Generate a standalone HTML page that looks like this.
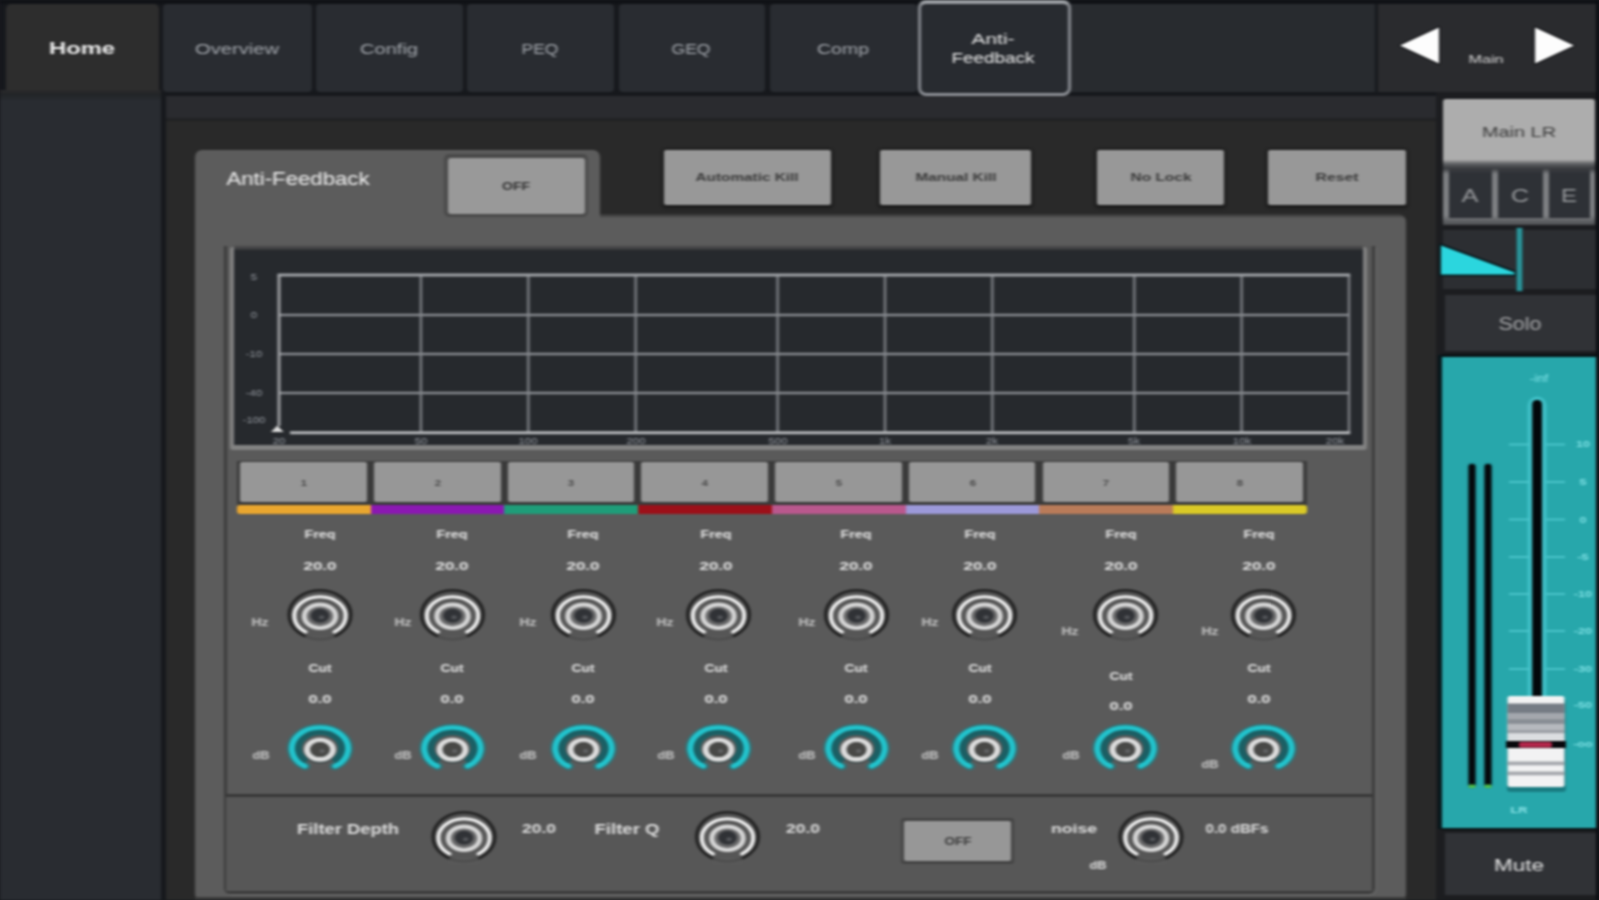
<!DOCTYPE html>
<html lang="en">
<head>
<meta charset="utf-8">
<title>Anti-Feedback</title>
<style>
html,body{margin:0;padding:0;background:#16181c;overflow:hidden;}
#app{position:relative;width:1599px;height:900px;overflow:hidden;background:#16181c;font-family:"Liberation Sans", sans-serif;filter:url(#soft);}
#app>div{position:absolute;}
#app>svg{position:absolute;left:0;top:0;}
#app>span{position:absolute;white-space:nowrap;line-height:1;transform-origin:50% 50%;}
</style>
</head>
<body>
<svg width="0" height="0" style="position:absolute"><defs><filter id="soft" x="0" y="0" width="100%" height="100%" color-interpolation-filters="sRGB"><feGaussianBlur stdDeviation="1.4 1.05" edgeMode="duplicate"/></filter></defs></svg>
<div id="app">
<div style="left:0px;top:0px;width:1599px;height:900px;background:#16181c;"></div>
<div style="left:0px;top:0px;width:1599px;height:4px;background:#101216;"></div>
<div style="left:1070px;top:4px;width:305px;height:88px;background:#282b2f;"></div>
<div style="left:6px;top:4px;width:152.5px;height:88px;background:#2d2d2d;border-radius:5px 5px 0 0;"></div>
<div style="left:163px;top:4px;width:148.5px;height:88px;background:#292c31;border-radius:4px;"></div>
<div style="left:316px;top:4px;width:147px;height:88px;background:#292c31;border-radius:4px;"></div>
<div style="left:467px;top:4px;width:147px;height:88px;background:#292c31;border-radius:4px;"></div>
<div style="left:618.5px;top:4px;width:146.5px;height:88px;background:#292c31;border-radius:4px;"></div>
<div style="left:769.5px;top:4px;width:147.0px;height:88px;background:#292c31;border-radius:4px;"></div>
<div style="left:917.5px;top:0px;width:153px;height:96px;background:#282b30;border-radius:8px;border:3.5px solid #8a8d93;border-top:4.5px solid #9a9da2;box-sizing:border-box;"></div>
<div style="left:1378px;top:4px;width:217.5px;height:88px;background:#2a2b2e;"></div>
<div style="left:0px;top:91px;width:161px;height:809px;background:#292c31;"></div>
<div style="left:0px;top:90px;width:161px;height:11px;background:linear-gradient(#2a2a2b 0,#222427 40%,#24272a 60%,#292c31 100%);"></div>
<div style="left:165.5px;top:96px;width:1270.5px;height:804px;background:#292929;"></div>
<div style="left:165.5px;top:96px;width:1270.5px;height:26px;background:linear-gradient(#2a2b2f 0,#2a2b2f 80%,#1e1f21 92%,#292929 100%);"></div>
<div style="left:1436px;top:92px;width:163px;height:808px;background:#1c1d20;"></div>
<div style="left:195px;top:214px;width:1211px;height:686px;background:linear-gradient(#353535 0,#5c5c5c 4.5px);border-radius:0 8px 6px 6px;"></div>
<div style="left:195px;top:150px;width:405px;height:80px;background:#5c5c5c;border-radius:7px 7px 0 0;"></div>
<div style="left:195px;top:897px;width:1211px;height:3px;background:#3a3a3a;"></div>
<div style="left:223.5px;top:246px;width:1151px;height:647.5px;background:#5a5a5a;border:3px solid #3b3b3b;border-top:none;box-sizing:border-box;border-radius:0 0 6px 6px;box-shadow:1.5px 1.5px 0 #666;"></div>
<div style="left:226px;top:793.5px;width:1146px;height:3.5px;background:#383838;"></div>
<div style="left:226px;top:797px;width:1146px;height:94px;background:#575757;"></div>
<div style="left:444px;top:154px;width:144px;height:63px;background:#4a4a4a;border-radius:5px;"></div>
<div style="left:448px;top:158px;width:137px;height:56px;background:#999;border-radius:3px;"></div>
<div style="left:664px;top:150px;width:167px;height:55px;background:#989898;border-radius:2px;box-shadow:0 1px 3px 1.5px #1b1b1b;"></div>
<div style="left:879.5px;top:150px;width:151.5px;height:55px;background:#989898;border-radius:2px;box-shadow:0 1px 3px 1.5px #1b1b1b;"></div>
<div style="left:1097px;top:150px;width:127px;height:55px;background:#989898;border-radius:2px;box-shadow:0 1px 3px 1.5px #1b1b1b;"></div>
<div style="left:1268px;top:150px;width:138px;height:55px;background:#989898;border-radius:2px;box-shadow:0 1px 3px 1.5px #1b1b1b;"></div>
<div style="left:230px;top:247px;width:1137px;height:202.5px;background:#828282;border-radius:3px;"></div>
<div style="left:233.5px;top:244.5px;width:1129.5px;height:8.5px;background:linear-gradient(#585858 0,#3d3e40 45%,#26292d 100%);"></div>
<div style="left:233.5px;top:250px;width:1129.5px;height:194.5px;background:#26292d;"></div>
<div style="left:236.5px;top:461px;width:134.7px;height:43.5px;background:#3a3a3a;"></div>
<div style="left:240.3px;top:461.5px;width:126.6px;height:40px;background:#979797;border-radius:2px;"></div>
<div style="left:370.2px;top:461px;width:134.7px;height:43.5px;background:#3a3a3a;"></div>
<div style="left:374.0px;top:461.5px;width:126.6px;height:40px;background:#979797;border-radius:2px;"></div>
<div style="left:503.9px;top:461px;width:134.7px;height:43.5px;background:#3a3a3a;"></div>
<div style="left:507.7px;top:461.5px;width:126.6px;height:40px;background:#979797;border-radius:2px;"></div>
<div style="left:637.6px;top:461px;width:134.7px;height:43.5px;background:#3a3a3a;"></div>
<div style="left:641.4px;top:461.5px;width:126.6px;height:40px;background:#979797;border-radius:2px;"></div>
<div style="left:771.3px;top:461px;width:134.7px;height:43.5px;background:#3a3a3a;"></div>
<div style="left:775.1px;top:461.5px;width:126.6px;height:40px;background:#979797;border-radius:2px;"></div>
<div style="left:905.0px;top:461px;width:134.7px;height:43.5px;background:#3a3a3a;"></div>
<div style="left:908.8px;top:461.5px;width:126.6px;height:40px;background:#979797;border-radius:2px;"></div>
<div style="left:1038.7px;top:461px;width:134.7px;height:43.5px;background:#3a3a3a;"></div>
<div style="left:1042.5px;top:461.5px;width:126.6px;height:40px;background:#979797;border-radius:2px;"></div>
<div style="left:1172.4px;top:461px;width:134.7px;height:43.5px;background:#3a3a3a;"></div>
<div style="left:1176.2px;top:461.5px;width:126.6px;height:40px;background:#979797;border-radius:2px;"></div>
<div style="left:237.0px;top:504.5px;width:134.0px;height:9px;background:#e9a62f;border-radius:3px 0 0 3px;"></div>
<div style="left:370.7px;top:504.5px;width:134.0px;height:9px;background:#8b18b2;border-radius:0;"></div>
<div style="left:504.4px;top:504.5px;width:134.0px;height:9px;background:#1f9d79;border-radius:0;"></div>
<div style="left:638.1px;top:504.5px;width:134.0px;height:9px;background:#9c1019;border-radius:0;"></div>
<div style="left:771.8px;top:504.5px;width:134.0px;height:9px;background:#b9588d;border-radius:0;"></div>
<div style="left:905.5px;top:504.5px;width:134.0px;height:9px;background:#9c99d9;border-radius:0;"></div>
<div style="left:1039.2px;top:504.5px;width:134.0px;height:9px;background:#b97b59;border-radius:0;"></div>
<div style="left:1172.9px;top:504.5px;width:134.0px;height:9px;background:#dac926;border-radius:0 3px 3px 0;"></div>
<div style="left:901px;top:818px;width:113px;height:46px;background:#444;border-radius:3px;"></div>
<div style="left:904px;top:821px;width:107px;height:40px;background:#979797;border-radius:2px;"></div>
<div style="left:1443px;top:99px;width:152px;height:61px;background:#adadad;border-radius:3px 3px 0 0;"></div>
<div style="left:1443px;top:160px;width:152px;height:65px;background:linear-gradient(#7c7e81 0,#7f8184 85%,#4a4c4f 100%);"></div>
<div style="left:1449px;top:166px;width:43px;height:51.5px;background:#2e3136;"></div>
<div style="left:1498px;top:166px;width:45px;height:51.5px;background:#2e3136;"></div>
<div style="left:1549px;top:166px;width:41px;height:51.5px;background:#2e3136;"></div>
<div style="left:1443px;top:160px;width:152px;height:14px;background:linear-gradient(#a2a2a2 0,#5a5c5f 30%,#3a3c40 60%,rgba(46,49,54,0) 100%);"></div>
<div style="left:1443px;top:230px;width:152.5px;height:59px;background:#2c2e32;"></div>
<div style="left:1445px;top:295px;width:150.5px;height:55.5px;background:#303236;"></div>
<div style="left:1441px;top:356.5px;width:154.5px;height:471px;background:#27a7ab;"></div>
<div style="left:1441px;top:354px;width:154.5px;height:2.5px;background:#0a1315;"></div>
<div style="left:1438px;top:355px;width:3.5px;height:474px;background:#06161a;"></div>
<div style="left:1441px;top:827.5px;width:154.5px;height:2.5px;background:#0a1315;"></div>
<div style="left:1445px;top:832.5px;width:150.5px;height:62.5px;background:#303236;"></div>
<div style="left:1595.5px;top:0px;width:3.5px;height:900px;background:#0b0d11;"></div>
<svg width="1599" height="900" viewBox="0 0 1599 900">
<path d="M1400 45.5L1439 27.5V63.5Z" fill="#fdfdfd" stroke="#17181b" stroke-width="3" stroke-linejoin="round" paint-order="stroke"/>
<path d="M1574 45.5L1535 27.5V63.5Z" fill="#fdfdfd" stroke="#17181b" stroke-width="3" stroke-linejoin="round" paint-order="stroke"/>
<line x1="420.9" y1="275" x2="420.9" y2="432.5" stroke="#84878c" stroke-width="2.3"/>
<line x1="528.3" y1="275" x2="528.3" y2="432.5" stroke="#84878c" stroke-width="2.3"/>
<line x1="635.7" y1="275" x2="635.7" y2="432.5" stroke="#84878c" stroke-width="2.3"/>
<line x1="777.6" y1="275" x2="777.6" y2="432.5" stroke="#84878c" stroke-width="2.3"/>
<line x1="885.0" y1="275" x2="885.0" y2="432.5" stroke="#84878c" stroke-width="2.3"/>
<line x1="992.3" y1="275" x2="992.3" y2="432.5" stroke="#84878c" stroke-width="2.3"/>
<line x1="1134.3" y1="275" x2="1134.3" y2="432.5" stroke="#84878c" stroke-width="2.3"/>
<line x1="1241.6" y1="275" x2="1241.6" y2="432.5" stroke="#84878c" stroke-width="2.3"/>
<line x1="1349.0" y1="275" x2="1349.0" y2="432.5" stroke="#84878c" stroke-width="2.3"/>
<line x1="279" y1="315" x2="1349" y2="315" stroke="#84878c" stroke-width="2.3"/>
<line x1="279" y1="354" x2="1349" y2="354" stroke="#84878c" stroke-width="2.3"/>
<line x1="279" y1="393" x2="1349" y2="393" stroke="#84878c" stroke-width="2.3"/>
<line x1="277.6" y1="275" x2="1350.2" y2="275" stroke="#9c9fa3" stroke-width="2.8"/>
<line x1="279" y1="275" x2="279" y2="426" stroke="#a6a8ab" stroke-width="2.8"/>
<line x1="290" y1="432.8" x2="1350.2" y2="432.8" stroke="#b2b4b7" stroke-width="3"/>
<path d="M271 432L277.3 425.5L283.6 432Z" fill="#dcdcdc"/>
<g transform="translate(320 616) scale(1.333 1)"><ellipse cx="0" cy="-1.2" rx="23.1" ry="24.6" fill="#565656" stroke="#222" stroke-width="2.6"/><path d="M-10.79 16.00A19.3 19.3 0 1 1 10.79 16.00" fill="none" stroke="#efefef" stroke-width="3.0" stroke-linecap="round"/><circle cx="0" cy="0.3" r="11.8" fill="#6a6a6b" stroke="#d6d6d6" stroke-width="3.8"/><circle cx="0" cy="-0.3" r="7" fill="#303236"/><circle cx="1.2" cy="1.2" r="2" fill="#55575b"/><rect x="-11" y="19.5" width="22" height="7" fill="#5a5a5a" opacity="0.8"/></g>
<g transform="translate(320 748.5) scale(1.333 1)"><path d="M-11.13 17.81A21 21 0 1 1 11.13 17.81" fill="none" stroke="#1d7f86" stroke-width="8.2" stroke-linecap="round" opacity="0.55"/><path d="M-10.84 13.87A17.6 17.6 0 1 1 10.84 13.87" fill="none" stroke="#1b5f64" stroke-width="8.0" stroke-linecap="butt"/><path d="M-11.49 17.70A21.1 21.1 0 1 1 11.49 17.70" fill="none" stroke="#22c3cc" stroke-width="4.5" stroke-linecap="round"/><circle cx="0" cy="2.6" r="12.2" fill="#3c4a4b"/><circle cx="0" cy="1.2" r="9.7" fill="none" stroke="#dcdcdc" stroke-width="4.6"/><circle cx="0" cy="1" r="7.4" fill="#484846"/><circle cx="1.6" cy="2.4" r="2" fill="#626365"/></g>
<g transform="translate(452.5 616) scale(1.333 1)"><ellipse cx="0" cy="-1.2" rx="23.1" ry="24.6" fill="#565656" stroke="#222" stroke-width="2.6"/><path d="M-10.79 16.00A19.3 19.3 0 1 1 10.79 16.00" fill="none" stroke="#efefef" stroke-width="3.0" stroke-linecap="round"/><circle cx="0" cy="0.3" r="11.8" fill="#6a6a6b" stroke="#d6d6d6" stroke-width="3.8"/><circle cx="0" cy="-0.3" r="7" fill="#303236"/><circle cx="1.2" cy="1.2" r="2" fill="#55575b"/><rect x="-11" y="19.5" width="22" height="7" fill="#5a5a5a" opacity="0.8"/></g>
<g transform="translate(452.5 748.5) scale(1.333 1)"><path d="M-11.13 17.81A21 21 0 1 1 11.13 17.81" fill="none" stroke="#1d7f86" stroke-width="8.2" stroke-linecap="round" opacity="0.55"/><path d="M-10.84 13.87A17.6 17.6 0 1 1 10.84 13.87" fill="none" stroke="#1b5f64" stroke-width="8.0" stroke-linecap="butt"/><path d="M-11.49 17.70A21.1 21.1 0 1 1 11.49 17.70" fill="none" stroke="#22c3cc" stroke-width="4.5" stroke-linecap="round"/><circle cx="0" cy="2.6" r="12.2" fill="#3c4a4b"/><circle cx="0" cy="1.2" r="9.7" fill="none" stroke="#dcdcdc" stroke-width="4.6"/><circle cx="0" cy="1" r="7.4" fill="#484846"/><circle cx="1.6" cy="2.4" r="2" fill="#626365"/></g>
<g transform="translate(583.5 616) scale(1.333 1)"><ellipse cx="0" cy="-1.2" rx="23.1" ry="24.6" fill="#565656" stroke="#222" stroke-width="2.6"/><path d="M-10.79 16.00A19.3 19.3 0 1 1 10.79 16.00" fill="none" stroke="#efefef" stroke-width="3.0" stroke-linecap="round"/><circle cx="0" cy="0.3" r="11.8" fill="#6a6a6b" stroke="#d6d6d6" stroke-width="3.8"/><circle cx="0" cy="-0.3" r="7" fill="#303236"/><circle cx="1.2" cy="1.2" r="2" fill="#55575b"/><rect x="-11" y="19.5" width="22" height="7" fill="#5a5a5a" opacity="0.8"/></g>
<g transform="translate(583.5 748.5) scale(1.333 1)"><path d="M-11.13 17.81A21 21 0 1 1 11.13 17.81" fill="none" stroke="#1d7f86" stroke-width="8.2" stroke-linecap="round" opacity="0.55"/><path d="M-10.84 13.87A17.6 17.6 0 1 1 10.84 13.87" fill="none" stroke="#1b5f64" stroke-width="8.0" stroke-linecap="butt"/><path d="M-11.49 17.70A21.1 21.1 0 1 1 11.49 17.70" fill="none" stroke="#22c3cc" stroke-width="4.5" stroke-linecap="round"/><circle cx="0" cy="2.6" r="12.2" fill="#3c4a4b"/><circle cx="0" cy="1.2" r="9.7" fill="none" stroke="#dcdcdc" stroke-width="4.6"/><circle cx="0" cy="1" r="7.4" fill="#484846"/><circle cx="1.6" cy="2.4" r="2" fill="#626365"/></g>
<g transform="translate(718.5 616) scale(1.333 1)"><ellipse cx="0" cy="-1.2" rx="23.1" ry="24.6" fill="#565656" stroke="#222" stroke-width="2.6"/><path d="M-10.79 16.00A19.3 19.3 0 1 1 10.79 16.00" fill="none" stroke="#efefef" stroke-width="3.0" stroke-linecap="round"/><circle cx="0" cy="0.3" r="11.8" fill="#6a6a6b" stroke="#d6d6d6" stroke-width="3.8"/><circle cx="0" cy="-0.3" r="7" fill="#303236"/><circle cx="1.2" cy="1.2" r="2" fill="#55575b"/><rect x="-11" y="19.5" width="22" height="7" fill="#5a5a5a" opacity="0.8"/></g>
<g transform="translate(718.5 748.5) scale(1.333 1)"><path d="M-11.13 17.81A21 21 0 1 1 11.13 17.81" fill="none" stroke="#1d7f86" stroke-width="8.2" stroke-linecap="round" opacity="0.55"/><path d="M-10.84 13.87A17.6 17.6 0 1 1 10.84 13.87" fill="none" stroke="#1b5f64" stroke-width="8.0" stroke-linecap="butt"/><path d="M-11.49 17.70A21.1 21.1 0 1 1 11.49 17.70" fill="none" stroke="#22c3cc" stroke-width="4.5" stroke-linecap="round"/><circle cx="0" cy="2.6" r="12.2" fill="#3c4a4b"/><circle cx="0" cy="1.2" r="9.7" fill="none" stroke="#dcdcdc" stroke-width="4.6"/><circle cx="0" cy="1" r="7.4" fill="#484846"/><circle cx="1.6" cy="2.4" r="2" fill="#626365"/></g>
<g transform="translate(856.5 616) scale(1.333 1)"><ellipse cx="0" cy="-1.2" rx="23.1" ry="24.6" fill="#565656" stroke="#222" stroke-width="2.6"/><path d="M-10.79 16.00A19.3 19.3 0 1 1 10.79 16.00" fill="none" stroke="#efefef" stroke-width="3.0" stroke-linecap="round"/><circle cx="0" cy="0.3" r="11.8" fill="#6a6a6b" stroke="#d6d6d6" stroke-width="3.8"/><circle cx="0" cy="-0.3" r="7" fill="#303236"/><circle cx="1.2" cy="1.2" r="2" fill="#55575b"/><rect x="-11" y="19.5" width="22" height="7" fill="#5a5a5a" opacity="0.8"/></g>
<g transform="translate(856.5 748.5) scale(1.333 1)"><path d="M-11.13 17.81A21 21 0 1 1 11.13 17.81" fill="none" stroke="#1d7f86" stroke-width="8.2" stroke-linecap="round" opacity="0.55"/><path d="M-10.84 13.87A17.6 17.6 0 1 1 10.84 13.87" fill="none" stroke="#1b5f64" stroke-width="8.0" stroke-linecap="butt"/><path d="M-11.49 17.70A21.1 21.1 0 1 1 11.49 17.70" fill="none" stroke="#22c3cc" stroke-width="4.5" stroke-linecap="round"/><circle cx="0" cy="2.6" r="12.2" fill="#3c4a4b"/><circle cx="0" cy="1.2" r="9.7" fill="none" stroke="#dcdcdc" stroke-width="4.6"/><circle cx="0" cy="1" r="7.4" fill="#484846"/><circle cx="1.6" cy="2.4" r="2" fill="#626365"/></g>
<g transform="translate(984.5 616) scale(1.333 1)"><ellipse cx="0" cy="-1.2" rx="23.1" ry="24.6" fill="#565656" stroke="#222" stroke-width="2.6"/><path d="M-10.79 16.00A19.3 19.3 0 1 1 10.79 16.00" fill="none" stroke="#efefef" stroke-width="3.0" stroke-linecap="round"/><circle cx="0" cy="0.3" r="11.8" fill="#6a6a6b" stroke="#d6d6d6" stroke-width="3.8"/><circle cx="0" cy="-0.3" r="7" fill="#303236"/><circle cx="1.2" cy="1.2" r="2" fill="#55575b"/><rect x="-11" y="19.5" width="22" height="7" fill="#5a5a5a" opacity="0.8"/></g>
<g transform="translate(984.5 748.5) scale(1.333 1)"><path d="M-11.13 17.81A21 21 0 1 1 11.13 17.81" fill="none" stroke="#1d7f86" stroke-width="8.2" stroke-linecap="round" opacity="0.55"/><path d="M-10.84 13.87A17.6 17.6 0 1 1 10.84 13.87" fill="none" stroke="#1b5f64" stroke-width="8.0" stroke-linecap="butt"/><path d="M-11.49 17.70A21.1 21.1 0 1 1 11.49 17.70" fill="none" stroke="#22c3cc" stroke-width="4.5" stroke-linecap="round"/><circle cx="0" cy="2.6" r="12.2" fill="#3c4a4b"/><circle cx="0" cy="1.2" r="9.7" fill="none" stroke="#dcdcdc" stroke-width="4.6"/><circle cx="0" cy="1" r="7.4" fill="#484846"/><circle cx="1.6" cy="2.4" r="2" fill="#626365"/></g>
<g transform="translate(1125.5 616) scale(1.333 1)"><ellipse cx="0" cy="-1.2" rx="23.1" ry="24.6" fill="#565656" stroke="#222" stroke-width="2.6"/><path d="M-10.79 16.00A19.3 19.3 0 1 1 10.79 16.00" fill="none" stroke="#efefef" stroke-width="3.0" stroke-linecap="round"/><circle cx="0" cy="0.3" r="11.8" fill="#6a6a6b" stroke="#d6d6d6" stroke-width="3.8"/><circle cx="0" cy="-0.3" r="7" fill="#303236"/><circle cx="1.2" cy="1.2" r="2" fill="#55575b"/><rect x="-11" y="19.5" width="22" height="7" fill="#5a5a5a" opacity="0.8"/></g>
<g transform="translate(1125.5 748.5) scale(1.333 1)"><path d="M-11.13 17.81A21 21 0 1 1 11.13 17.81" fill="none" stroke="#1d7f86" stroke-width="8.2" stroke-linecap="round" opacity="0.55"/><path d="M-10.84 13.87A17.6 17.6 0 1 1 10.84 13.87" fill="none" stroke="#1b5f64" stroke-width="8.0" stroke-linecap="butt"/><path d="M-11.49 17.70A21.1 21.1 0 1 1 11.49 17.70" fill="none" stroke="#22c3cc" stroke-width="4.5" stroke-linecap="round"/><circle cx="0" cy="2.6" r="12.2" fill="#3c4a4b"/><circle cx="0" cy="1.2" r="9.7" fill="none" stroke="#dcdcdc" stroke-width="4.6"/><circle cx="0" cy="1" r="7.4" fill="#484846"/><circle cx="1.6" cy="2.4" r="2" fill="#626365"/></g>
<g transform="translate(1263.5 616) scale(1.333 1)"><ellipse cx="0" cy="-1.2" rx="23.1" ry="24.6" fill="#565656" stroke="#222" stroke-width="2.6"/><path d="M-10.79 16.00A19.3 19.3 0 1 1 10.79 16.00" fill="none" stroke="#efefef" stroke-width="3.0" stroke-linecap="round"/><circle cx="0" cy="0.3" r="11.8" fill="#6a6a6b" stroke="#d6d6d6" stroke-width="3.8"/><circle cx="0" cy="-0.3" r="7" fill="#303236"/><circle cx="1.2" cy="1.2" r="2" fill="#55575b"/><rect x="-11" y="19.5" width="22" height="7" fill="#5a5a5a" opacity="0.8"/></g>
<g transform="translate(1263.5 748.5) scale(1.333 1)"><path d="M-11.13 17.81A21 21 0 1 1 11.13 17.81" fill="none" stroke="#1d7f86" stroke-width="8.2" stroke-linecap="round" opacity="0.55"/><path d="M-10.84 13.87A17.6 17.6 0 1 1 10.84 13.87" fill="none" stroke="#1b5f64" stroke-width="8.0" stroke-linecap="butt"/><path d="M-11.49 17.70A21.1 21.1 0 1 1 11.49 17.70" fill="none" stroke="#22c3cc" stroke-width="4.5" stroke-linecap="round"/><circle cx="0" cy="2.6" r="12.2" fill="#3c4a4b"/><circle cx="0" cy="1.2" r="9.7" fill="none" stroke="#dcdcdc" stroke-width="4.6"/><circle cx="0" cy="1" r="7.4" fill="#484846"/><circle cx="1.6" cy="2.4" r="2" fill="#626365"/></g>
<g transform="translate(464 838) scale(1.333 1)"><ellipse cx="0" cy="-1.2" rx="23.1" ry="24.6" fill="#565656" stroke="#222" stroke-width="2.6"/><path d="M-10.79 16.00A19.3 19.3 0 1 1 10.79 16.00" fill="none" stroke="#efefef" stroke-width="3.0" stroke-linecap="round"/><circle cx="0" cy="0.3" r="11.8" fill="#6a6a6b" stroke="#d6d6d6" stroke-width="3.8"/><circle cx="0" cy="-0.3" r="7" fill="#303236"/><circle cx="1.2" cy="1.2" r="2" fill="#55575b"/><rect x="-11" y="19.5" width="22" height="7" fill="#5a5a5a" opacity="0.8"/></g>
<g transform="translate(727.5 838) scale(1.333 1)"><ellipse cx="0" cy="-1.2" rx="23.1" ry="24.6" fill="#565656" stroke="#222" stroke-width="2.6"/><path d="M-10.79 16.00A19.3 19.3 0 1 1 10.79 16.00" fill="none" stroke="#efefef" stroke-width="3.0" stroke-linecap="round"/><circle cx="0" cy="0.3" r="11.8" fill="#6a6a6b" stroke="#d6d6d6" stroke-width="3.8"/><circle cx="0" cy="-0.3" r="7" fill="#303236"/><circle cx="1.2" cy="1.2" r="2" fill="#55575b"/><rect x="-11" y="19.5" width="22" height="7" fill="#5a5a5a" opacity="0.8"/></g>
<g transform="translate(1151 838) scale(1.333 1)"><ellipse cx="0" cy="-1.2" rx="23.1" ry="24.6" fill="#565656" stroke="#222" stroke-width="2.6"/><path d="M-10.79 16.00A19.3 19.3 0 1 1 10.79 16.00" fill="none" stroke="#efefef" stroke-width="3.0" stroke-linecap="round"/><circle cx="0" cy="0.3" r="11.8" fill="#6a6a6b" stroke="#d6d6d6" stroke-width="3.8"/><circle cx="0" cy="-0.3" r="7" fill="#303236"/><circle cx="1.2" cy="1.2" r="2" fill="#55575b"/><rect x="-11" y="19.5" width="22" height="7" fill="#5a5a5a" opacity="0.8"/></g>
<path d="M1441 245.5V274.5H1514.5V272.5Z" fill="#2bd6de" stroke="#0a1b1f" stroke-width="4" stroke-linejoin="round" paint-order="stroke"/>
<rect x="1516" y="227.5" width="7" height="64" fill="#1b3a3e"/>
<rect x="1516.8" y="228" width="5.4" height="63" fill="#2b959b"/>
<rect x="1527.6" y="396.5" width="19" height="314" rx="9" fill="#3fc0c7"/>
<rect x="1532.2" y="400" width="9.8" height="308" rx="4.5" fill="#03080b"/>
<rect x="1467.3" y="462.5" width="9.4" height="326" rx="4" fill="#1e8f95"/>
<rect x="1468.5" y="464" width="7" height="323" rx="3" fill="#05090b"/>
<rect x="1468.5" y="784.5" width="7" height="3.5" rx="1.5" fill="#4fbf4a"/>
<rect x="1483.3" y="462.5" width="9.4" height="326" rx="4" fill="#1e8f95"/>
<rect x="1484.5" y="464" width="7" height="323" rx="3" fill="#05090b"/>
<rect x="1484.5" y="784.5" width="7" height="3.5" rx="1.5" fill="#4fbf4a"/>
<rect x="1509" y="443.5" width="21" height="2" fill="#49c3c9"/>
<rect x="1546" y="443.5" width="19" height="2" fill="#49c3c9"/>
<rect x="1509" y="481" width="21" height="2" fill="#49c3c9"/>
<rect x="1546" y="481" width="19" height="2" fill="#49c3c9"/>
<rect x="1509" y="518.5" width="21" height="2" fill="#49c3c9"/>
<rect x="1546" y="518.5" width="19" height="2" fill="#49c3c9"/>
<rect x="1509" y="556" width="21" height="2" fill="#49c3c9"/>
<rect x="1546" y="556" width="19" height="2" fill="#49c3c9"/>
<rect x="1509" y="593" width="21" height="2" fill="#49c3c9"/>
<rect x="1546" y="593" width="19" height="2" fill="#49c3c9"/>
<rect x="1509" y="630" width="21" height="2" fill="#49c3c9"/>
<rect x="1546" y="630" width="19" height="2" fill="#49c3c9"/>
<rect x="1509" y="668" width="21" height="2" fill="#49c3c9"/>
<rect x="1546" y="668" width="19" height="2" fill="#49c3c9"/>
<rect x="1509" y="705" width="21" height="2" fill="#49c3c9"/>
<rect x="1546" y="705" width="19" height="2" fill="#49c3c9"/>
<rect x="1509" y="742.5" width="21" height="2" fill="#49c3c9"/>
<rect x="1546" y="742.5" width="19" height="2" fill="#49c3c9"/>
<rect x="1507" y="699" width="59" height="93" rx="3" fill="#156e74" opacity="0.75"/>
<rect x="1507.5" y="696" width="57" height="91" rx="2.5" fill="#f2f2f3"/>
<rect x="1507.5" y="703.5" width="57" height="9.5" fill="#757b84"/>
<rect x="1507.5" y="713" width="57" height="5.5" fill="#a3a7ad"/>
<rect x="1507.5" y="718.5" width="57" height="6" fill="#898e95"/>
<rect x="1507.5" y="724.5" width="57" height="5.5" fill="#b6b9be"/>
<rect x="1507.5" y="730" width="57" height="3.5" fill="#9da0a6"/>
<rect x="1507.5" y="733.5" width="57" height="7.5" fill="#dcdee1"/>
<rect x="1506" y="741" width="60" height="7" fill="#08080c"/>
<rect x="1519" y="742" width="33" height="5.4" rx="2" fill="#b3274b"/>
<rect x="1507.5" y="761.5" width="57" height="3.8" fill="#a6a9ae"/>
<rect x="1507.5" y="771.5" width="57" height="3.8" fill="#a6a9ae"/>
</svg>
<span style="left:81.5px;top:48px;font-size:17px;font-weight:700;color:#f2f2f2;transform:translate(-50%,-50%) scaleX(1.397);">Home</span>
<span style="left:237px;top:49px;font-size:14.5px;font-weight:400;color:#a4a8ae;transform:translate(-50%,-50%) scaleX(1.39);">Overview</span>
<span style="left:388.5px;top:49px;font-size:14.5px;font-weight:400;color:#a4a8ae;transform:translate(-50%,-50%) scaleX(1.384);">Config</span>
<span style="left:540px;top:49px;font-size:14.5px;font-weight:400;color:#a4a8ae;transform:translate(-50%,-50%) scaleX(1.208);">PEQ</span>
<span style="left:691px;top:49px;font-size:14.5px;font-weight:400;color:#a4a8ae;transform:translate(-50%,-50%) scaleX(1.21);">GEQ</span>
<span style="left:842.5px;top:49px;font-size:14.5px;font-weight:400;color:#a4a8ae;transform:translate(-50%,-50%) scaleX(1.344);">Comp</span>
<span style="left:993px;top:39px;font-size:14.5px;font-weight:400;color:#ececec;transform:translate(-50%,-50%) scaleX(1.442);">Anti-</span>
<span style="left:993px;top:57.5px;font-size:14.5px;font-weight:400;color:#ececec;transform:translate(-50%,-50%) scaleX(1.303);">Feedback</span>
<span style="left:1486px;top:60px;font-size:11.5px;font-weight:400;color:#d8d8d8;transform:translate(-50%,-50%) scaleX(1.404);">Main</span>
<span style="left:298px;top:179px;font-size:18.5px;font-weight:400;color:#f2f2f2;transform:translate(-50%,-50%) scaleX(1.199);">Anti-Feedback</span>
<span style="left:515.5px;top:185.5px;font-size:10.5px;font-weight:700;color:#303030;transform:translate(-50%,-50%) scaleX(1.333);">OFF</span>
<span style="left:747px;top:178px;font-size:11.5px;font-weight:700;color:#383838;transform:translate(-50%,-50%) scaleX(1.332);">Automatic Kill</span>
<span style="left:955.5px;top:178px;font-size:11.5px;font-weight:700;color:#383838;transform:translate(-50%,-50%) scaleX(1.334);">Manual Kill</span>
<span style="left:1161px;top:178px;font-size:11.5px;font-weight:700;color:#383838;transform:translate(-50%,-50%) scaleX(1.344);">No Lock</span>
<span style="left:1336.5px;top:178px;font-size:11.5px;font-weight:700;color:#383838;transform:translate(-50%,-50%) scaleX(1.373);">Reset</span>
<span style="left:1519px;top:130.5px;font-size:15px;font-weight:400;color:#3a3a3a;transform:translate(-50%,-50%) scaleX(1.325);">Main LR</span>
<span style="left:1470px;top:195px;font-size:19px;font-weight:400;color:#989a9d;transform:translate(-50%,-50%) scaleX(1.34);">A</span>
<span style="left:1520px;top:195px;font-size:19px;font-weight:400;color:#989a9d;transform:translate(-50%,-50%) scaleX(1.311);">C</span>
<span style="left:1569px;top:195px;font-size:19px;font-weight:400;color:#989a9d;transform:translate(-50%,-50%) scaleX(1.261);">E</span>
<span style="left:1519.5px;top:324px;font-size:18px;font-weight:400;color:#a6a7a9;transform:translate(-50%,-50%) scaleX(1.193);">Solo</span>
<span style="left:1519px;top:865px;font-size:17px;font-weight:400;color:#e6e6e6;transform:translate(-50%,-50%) scaleX(1.323);">Mute</span>
<span style="left:1539px;top:378.5px;font-size:10px;font-weight:400;color:#7ee2e6;transform:translate(-50%,-50%) scaleX(1.333);">-inf</span>
<span style="left:1582.5px;top:444px;font-size:9.5px;font-weight:700;color:#7ddfe3;transform:translate(-50%,-50%) scaleX(1.333);">10</span>
<span style="left:1582.5px;top:482px;font-size:9.5px;font-weight:700;color:#7ddfe3;transform:translate(-50%,-50%) scaleX(1.333);">5</span>
<span style="left:1582.5px;top:519.5px;font-size:9.5px;font-weight:700;color:#7ddfe3;transform:translate(-50%,-50%) scaleX(1.333);">0</span>
<span style="left:1582.5px;top:557px;font-size:9.5px;font-weight:700;color:#7ddfe3;transform:translate(-50%,-50%) scaleX(1.333);">-5</span>
<span style="left:1582.5px;top:594px;font-size:9.5px;font-weight:700;color:#7ddfe3;transform:translate(-50%,-50%) scaleX(1.333);">-10</span>
<span style="left:1582.5px;top:631px;font-size:9.5px;font-weight:700;color:#7ddfe3;transform:translate(-50%,-50%) scaleX(1.333);">-20</span>
<span style="left:1582.5px;top:669px;font-size:9.5px;font-weight:700;color:#7ddfe3;transform:translate(-50%,-50%) scaleX(1.333);">-30</span>
<span style="left:1582.5px;top:705px;font-size:9.5px;font-weight:700;color:#7ddfe3;transform:translate(-50%,-50%) scaleX(1.333);">-50</span>
<span style="left:1582.5px;top:744px;font-size:9.5px;font-weight:700;color:#7ddfe3;transform:translate(-50%,-50%) scaleX(1.333);">-oo</span>
<span style="left:1519px;top:810px;font-size:9.5px;font-weight:700;color:#8de4e8;transform:translate(-50%,-50%) scaleX(1.333);">LR</span>
<span style="left:254px;top:277px;font-size:8.5px;font-weight:400;color:#9599a0;transform:translate(-50%,-50%) scaleX(1.333);">5</span>
<span style="left:254px;top:315px;font-size:8.5px;font-weight:400;color:#9599a0;transform:translate(-50%,-50%) scaleX(1.333);">0</span>
<span style="left:254px;top:354px;font-size:8.5px;font-weight:400;color:#9599a0;transform:translate(-50%,-50%) scaleX(1.333);">-10</span>
<span style="left:254px;top:393px;font-size:8.5px;font-weight:400;color:#9599a0;transform:translate(-50%,-50%) scaleX(1.333);">-40</span>
<span style="left:254px;top:420px;font-size:8.5px;font-weight:400;color:#9599a0;transform:translate(-50%,-50%) scaleX(1.333);">-100</span>
<span style="left:279.0px;top:440.5px;font-size:8.5px;font-weight:400;color:#9599a0;transform:translate(-50%,-50%) scaleX(1.333);">20</span>
<span style="left:420.93193642636004px;top:440.5px;font-size:8.5px;font-weight:400;color:#9599a0;transform:translate(-50%,-50%) scaleX(1.333);">50</span>
<span style="left:528.2993015465133px;top:440.5px;font-size:8.5px;font-weight:400;color:#9599a0;transform:translate(-50%,-50%) scaleX(1.333);">100</span>
<span style="left:635.6666666666666px;top:440.5px;font-size:8.5px;font-weight:400;color:#9599a0;transform:translate(-50%,-50%) scaleX(1.333);">200</span>
<span style="left:777.5986030930267px;top:440.5px;font-size:8.5px;font-weight:400;color:#9599a0;transform:translate(-50%,-50%) scaleX(1.333);">500</span>
<span style="left:884.9659682131801px;top:440.5px;font-size:8.5px;font-weight:400;color:#9599a0;transform:translate(-50%,-50%) scaleX(1.333);">1k</span>
<span style="left:992.3333333333333px;top:440.5px;font-size:8.5px;font-weight:400;color:#9599a0;transform:translate(-50%,-50%) scaleX(1.333);">2k</span>
<span style="left:1134.2652697596932px;top:440.5px;font-size:8.5px;font-weight:400;color:#9599a0;transform:translate(-50%,-50%) scaleX(1.333);">5k</span>
<span style="left:1241.6326348798466px;top:440.5px;font-size:8.5px;font-weight:400;color:#9599a0;transform:translate(-50%,-50%) scaleX(1.333);">10k</span>
<span style="left:1335.0px;top:440.5px;font-size:8.5px;font-weight:400;color:#9599a0;transform:translate(-50%,-50%) scaleX(1.333);">20k</span>
<span style="left:304.0px;top:482.5px;font-size:8.5px;font-weight:700;color:#4a4a4a;transform:translate(-50%,-50%) scaleX(1.333);">1</span>
<span style="left:437.7px;top:482.5px;font-size:8.5px;font-weight:700;color:#4a4a4a;transform:translate(-50%,-50%) scaleX(1.333);">2</span>
<span style="left:571.4px;top:482.5px;font-size:8.5px;font-weight:700;color:#4a4a4a;transform:translate(-50%,-50%) scaleX(1.333);">3</span>
<span style="left:705.0999999999999px;top:482.5px;font-size:8.5px;font-weight:700;color:#4a4a4a;transform:translate(-50%,-50%) scaleX(1.333);">4</span>
<span style="left:838.8px;top:482.5px;font-size:8.5px;font-weight:700;color:#4a4a4a;transform:translate(-50%,-50%) scaleX(1.333);">5</span>
<span style="left:972.5px;top:482.5px;font-size:8.5px;font-weight:700;color:#4a4a4a;transform:translate(-50%,-50%) scaleX(1.333);">6</span>
<span style="left:1106.1999999999998px;top:482.5px;font-size:8.5px;font-weight:700;color:#4a4a4a;transform:translate(-50%,-50%) scaleX(1.333);">7</span>
<span style="left:1239.8999999999999px;top:482.5px;font-size:8.5px;font-weight:700;color:#4a4a4a;transform:translate(-50%,-50%) scaleX(1.333);">8</span>
<span style="left:320px;top:533.5px;font-size:10.5px;font-weight:700;color:#e8e8e8;transform:translate(-50%,-50%) scaleX(1.362);">Freq</span>
<span style="left:320px;top:565.5px;font-size:10.5px;font-weight:700;color:#e8e8e8;transform:translate(-50%,-50%) scaleX(1.615);">20.0</span>
<span style="left:260px;top:623px;font-size:10px;font-weight:700;color:#c8c8c8;transform:translate(-50%,-50%) scaleX(1.39);">Hz</span>
<span style="left:320px;top:667.5px;font-size:10.5px;font-weight:700;color:#e8e8e8;transform:translate(-50%,-50%) scaleX(1.314);">Cut</span>
<span style="left:320px;top:699px;font-size:10.5px;font-weight:700;color:#e8e8e8;transform:translate(-50%,-50%) scaleX(1.574);">0.0</span>
<span style="left:260.5px;top:756px;font-size:10px;font-weight:700;color:#c8c8c8;transform:translate(-50%,-50%) scaleX(1.274);">dB</span>
<span style="left:452px;top:533.5px;font-size:10.5px;font-weight:700;color:#e8e8e8;transform:translate(-50%,-50%) scaleX(1.362);">Freq</span>
<span style="left:452px;top:565.5px;font-size:10.5px;font-weight:700;color:#e8e8e8;transform:translate(-50%,-50%) scaleX(1.615);">20.0</span>
<span style="left:402.5px;top:623px;font-size:10px;font-weight:700;color:#c8c8c8;transform:translate(-50%,-50%) scaleX(1.39);">Hz</span>
<span style="left:452px;top:667.5px;font-size:10.5px;font-weight:700;color:#e8e8e8;transform:translate(-50%,-50%) scaleX(1.314);">Cut</span>
<span style="left:452px;top:699px;font-size:10.5px;font-weight:700;color:#e8e8e8;transform:translate(-50%,-50%) scaleX(1.574);">0.0</span>
<span style="left:403.0px;top:756px;font-size:10px;font-weight:700;color:#c8c8c8;transform:translate(-50%,-50%) scaleX(1.274);">dB</span>
<span style="left:583px;top:533.5px;font-size:10.5px;font-weight:700;color:#e8e8e8;transform:translate(-50%,-50%) scaleX(1.362);">Freq</span>
<span style="left:583px;top:565.5px;font-size:10.5px;font-weight:700;color:#e8e8e8;transform:translate(-50%,-50%) scaleX(1.615);">20.0</span>
<span style="left:527.5px;top:623px;font-size:10px;font-weight:700;color:#c8c8c8;transform:translate(-50%,-50%) scaleX(1.39);">Hz</span>
<span style="left:583px;top:667.5px;font-size:10.5px;font-weight:700;color:#e8e8e8;transform:translate(-50%,-50%) scaleX(1.314);">Cut</span>
<span style="left:583px;top:699px;font-size:10.5px;font-weight:700;color:#e8e8e8;transform:translate(-50%,-50%) scaleX(1.574);">0.0</span>
<span style="left:528.0px;top:756px;font-size:10px;font-weight:700;color:#c8c8c8;transform:translate(-50%,-50%) scaleX(1.274);">dB</span>
<span style="left:715.5px;top:533.5px;font-size:10.5px;font-weight:700;color:#e8e8e8;transform:translate(-50%,-50%) scaleX(1.362);">Freq</span>
<span style="left:715.5px;top:565.5px;font-size:10.5px;font-weight:700;color:#e8e8e8;transform:translate(-50%,-50%) scaleX(1.615);">20.0</span>
<span style="left:665px;top:623px;font-size:10px;font-weight:700;color:#c8c8c8;transform:translate(-50%,-50%) scaleX(1.39);">Hz</span>
<span style="left:715.5px;top:667.5px;font-size:10.5px;font-weight:700;color:#e8e8e8;transform:translate(-50%,-50%) scaleX(1.314);">Cut</span>
<span style="left:715.5px;top:699px;font-size:10.5px;font-weight:700;color:#e8e8e8;transform:translate(-50%,-50%) scaleX(1.574);">0.0</span>
<span style="left:665.5px;top:756px;font-size:10px;font-weight:700;color:#c8c8c8;transform:translate(-50%,-50%) scaleX(1.274);">dB</span>
<span style="left:856px;top:533.5px;font-size:10.5px;font-weight:700;color:#e8e8e8;transform:translate(-50%,-50%) scaleX(1.362);">Freq</span>
<span style="left:856px;top:565.5px;font-size:10.5px;font-weight:700;color:#e8e8e8;transform:translate(-50%,-50%) scaleX(1.615);">20.0</span>
<span style="left:806.5px;top:623px;font-size:10px;font-weight:700;color:#c8c8c8;transform:translate(-50%,-50%) scaleX(1.39);">Hz</span>
<span style="left:856px;top:667.5px;font-size:10.5px;font-weight:700;color:#e8e8e8;transform:translate(-50%,-50%) scaleX(1.314);">Cut</span>
<span style="left:856px;top:699px;font-size:10.5px;font-weight:700;color:#e8e8e8;transform:translate(-50%,-50%) scaleX(1.574);">0.0</span>
<span style="left:807.0px;top:756px;font-size:10px;font-weight:700;color:#c8c8c8;transform:translate(-50%,-50%) scaleX(1.274);">dB</span>
<span style="left:979.5px;top:533.5px;font-size:10.5px;font-weight:700;color:#e8e8e8;transform:translate(-50%,-50%) scaleX(1.362);">Freq</span>
<span style="left:979.5px;top:565.5px;font-size:10.5px;font-weight:700;color:#e8e8e8;transform:translate(-50%,-50%) scaleX(1.615);">20.0</span>
<span style="left:929.5px;top:623px;font-size:10px;font-weight:700;color:#c8c8c8;transform:translate(-50%,-50%) scaleX(1.39);">Hz</span>
<span style="left:979.5px;top:667.5px;font-size:10.5px;font-weight:700;color:#e8e8e8;transform:translate(-50%,-50%) scaleX(1.314);">Cut</span>
<span style="left:979.5px;top:699px;font-size:10.5px;font-weight:700;color:#e8e8e8;transform:translate(-50%,-50%) scaleX(1.574);">0.0</span>
<span style="left:930.0px;top:756px;font-size:10px;font-weight:700;color:#c8c8c8;transform:translate(-50%,-50%) scaleX(1.274);">dB</span>
<span style="left:1120.5px;top:533.5px;font-size:10.5px;font-weight:700;color:#e8e8e8;transform:translate(-50%,-50%) scaleX(1.362);">Freq</span>
<span style="left:1120.5px;top:565.5px;font-size:10.5px;font-weight:700;color:#e8e8e8;transform:translate(-50%,-50%) scaleX(1.615);">20.0</span>
<span style="left:1070px;top:631.5px;font-size:10px;font-weight:700;color:#c8c8c8;transform:translate(-50%,-50%) scaleX(1.39);">Hz</span>
<span style="left:1120.5px;top:675.5px;font-size:10.5px;font-weight:700;color:#e8e8e8;transform:translate(-50%,-50%) scaleX(1.314);">Cut</span>
<span style="left:1120.5px;top:706px;font-size:10.5px;font-weight:700;color:#e8e8e8;transform:translate(-50%,-50%) scaleX(1.574);">0.0</span>
<span style="left:1070.5px;top:756px;font-size:10px;font-weight:700;color:#c8c8c8;transform:translate(-50%,-50%) scaleX(1.274);">dB</span>
<span style="left:1258.5px;top:533.5px;font-size:10.5px;font-weight:700;color:#e8e8e8;transform:translate(-50%,-50%) scaleX(1.362);">Freq</span>
<span style="left:1258.5px;top:565.5px;font-size:10.5px;font-weight:700;color:#e8e8e8;transform:translate(-50%,-50%) scaleX(1.615);">20.0</span>
<span style="left:1209.5px;top:631.5px;font-size:10px;font-weight:700;color:#c8c8c8;transform:translate(-50%,-50%) scaleX(1.39);">Hz</span>
<span style="left:1258.5px;top:667.5px;font-size:10.5px;font-weight:700;color:#e8e8e8;transform:translate(-50%,-50%) scaleX(1.314);">Cut</span>
<span style="left:1258.5px;top:699px;font-size:10.5px;font-weight:700;color:#e8e8e8;transform:translate(-50%,-50%) scaleX(1.574);">0.0</span>
<span style="left:1210.0px;top:765px;font-size:10px;font-weight:700;color:#c8c8c8;transform:translate(-50%,-50%) scaleX(1.274);">dB</span>
<span style="left:347.5px;top:829px;font-size:14px;font-weight:700;color:#dedede;transform:translate(-50%,-50%) scaleX(1.311);">Filter Depth</span>
<span style="left:538.5px;top:828.5px;font-size:12px;font-weight:700;color:#dedede;transform:translate(-50%,-50%) scaleX(1.456);">20.0</span>
<span style="left:627px;top:829px;font-size:14px;font-weight:700;color:#dedede;transform:translate(-50%,-50%) scaleX(1.326);">Filter Q</span>
<span style="left:803px;top:828.5px;font-size:12px;font-weight:700;color:#dedede;transform:translate(-50%,-50%) scaleX(1.456);">20.0</span>
<span style="left:957.5px;top:842px;font-size:10px;font-weight:700;color:#383838;transform:translate(-50%,-50%) scaleX(1.35);">OFF</span>
<span style="left:1074px;top:829px;font-size:12px;font-weight:700;color:#dedede;transform:translate(-50%,-50%) scaleX(1.468);">noise</span>
<span style="left:1097.5px;top:864.5px;font-size:10.5px;font-weight:700;color:#dedede;transform:translate(-50%,-50%) scaleX(1.214);">dB</span>
<span style="left:1237px;top:829px;font-size:12px;font-weight:700;color:#dedede;transform:translate(-50%,-50%) scaleX(1.26);">0.0 dBFs</span>
</div>
</body>
</html>
